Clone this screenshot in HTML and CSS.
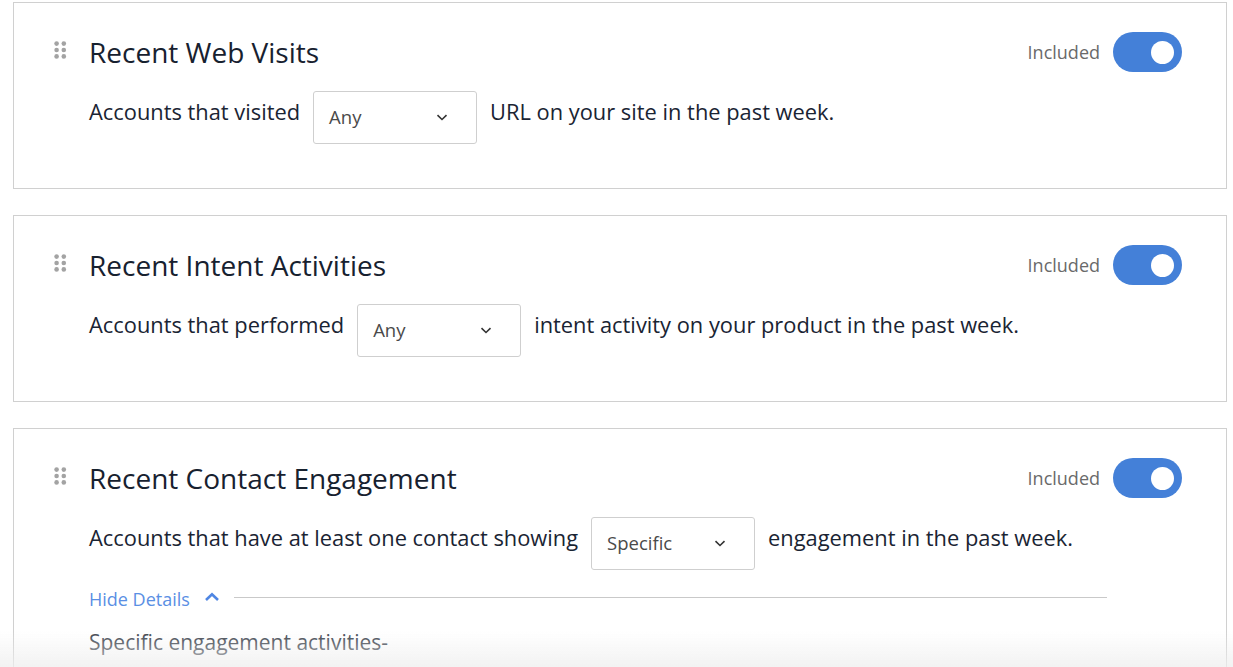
FILE: index.html
```html
<!DOCTYPE html>
<html lang="en">
<head>
<meta charset="utf-8">
<title>Signals</title>
<link rel="stylesheet" href="styles.css">
</head>
<body>
<div class="list">
  <section class="card">
    <div class="card-head">
      <span class="handle"><svg width="13" height="18" viewBox="0 0 13 18"><g fill="#a3a3a3"><circle cx="2.6" cy="2.6" r="2.3"/><circle cx="9.8" cy="2.6" r="2.3"/><circle cx="2.6" cy="9" r="2.3"/><circle cx="9.8" cy="9" r="2.3"/><circle cx="2.6" cy="15.4" r="2.3"/><circle cx="9.8" cy="15.4" r="2.3"/></g></svg></span>
      <h2 class="title">Recent Web Visits</h2>
      <span class="status">Included</span>
      <span class="toggle"><span class="knob"></span></span>
    </div>
    <div class="sentence">
      <span class="txt">Accounts that visited</span>
      <span class="select"><span class="val">Any</span><svg class="chev" width="12" height="7" viewBox="0 0 12 7"><path d="M1.5 1.2 L6 5.5 L10.5 1.2" fill="none" stroke="#333" stroke-width="1.6"/></svg></span>
      <span class="txt">URL on your site in the past week.</span>
    </div>
  </section>

  <section class="card">
    <div class="card-head">
      <span class="handle"><svg width="13" height="18" viewBox="0 0 13 18"><g fill="#a3a3a3"><circle cx="2.6" cy="2.6" r="2.3"/><circle cx="9.8" cy="2.6" r="2.3"/><circle cx="2.6" cy="9" r="2.3"/><circle cx="9.8" cy="9" r="2.3"/><circle cx="2.6" cy="15.4" r="2.3"/><circle cx="9.8" cy="15.4" r="2.3"/></g></svg></span>
      <h2 class="title">Recent Intent Activities</h2>
      <span class="status">Included</span>
      <span class="toggle"><span class="knob"></span></span>
    </div>
    <div class="sentence">
      <span class="txt">Accounts that performed</span>
      <span class="select"><span class="val">Any</span><svg class="chev" width="12" height="7" viewBox="0 0 12 7"><path d="M1.5 1.2 L6 5.5 L10.5 1.2" fill="none" stroke="#333" stroke-width="1.6"/></svg></span>
      <span class="txt">intent activity on your product in the past week.</span>
    </div>
  </section>

  <section class="card card-open">
    <div class="card-head">
      <span class="handle"><svg width="13" height="18" viewBox="0 0 13 18"><g fill="#a3a3a3"><circle cx="2.6" cy="2.6" r="2.3"/><circle cx="9.8" cy="2.6" r="2.3"/><circle cx="2.6" cy="9" r="2.3"/><circle cx="9.8" cy="9" r="2.3"/><circle cx="2.6" cy="15.4" r="2.3"/><circle cx="9.8" cy="15.4" r="2.3"/></g></svg></span>
      <h2 class="title">Recent Contact Engagement</h2>
      <span class="status">Included</span>
      <span class="toggle"><span class="knob"></span></span>
    </div>
    <div class="sentence">
      <span class="txt">Accounts that have at least one contact showing</span>
      <span class="select"><span class="val">Specific</span><svg class="chev" width="12" height="7" viewBox="0 0 12 7"><path d="M1.5 1.2 L6 5.5 L10.5 1.2" fill="none" stroke="#333" stroke-width="1.6"/></svg></span>
      <span class="txt">engagement in the past week.</span>
    </div>
    <div class="details">
      <div class="details-toggle">
        <span class="link">Hide Details</span>
        <svg class="up" width="16" height="10" viewBox="0 0 16 10"><path d="M2 8 L8 2.3 L14 8" fill="none" stroke="#4f86e3" stroke-width="2.6"/></svg>
        <span class="rule"></span>
      </div>
      <p class="details-label">Specific engagement activities-</p>
    </div>
  </section>
</div>
<div class="fade"></div>
</body>
</html>
```

FILE: styles.css
```css
html, body {
  margin: 0;
  padding: 0;
  background: #ffffff;
  overflow: hidden;
}

body {
  font-family: "Open Sans", "Noto Sans", sans-serif;
  color: #1d2838;
  height: 667px;
}

.list {
  padding: 2px 6px 0 13px;
  display: flex;
  flex-direction: column;
  gap: 26px;
}

.card {
  border: 1px solid #d0d0d0;
  padding: 29px 44px 44px 39px;
  background: #fff;
}

.card-open {
  padding-bottom: 120px;
}

.card-head {
  display: flex;
  align-items: center;
  height: 40px;
}

.handle {
  width: 36px;
  display: flex;
  align-items: center;
  margin-top: -4px;
}

.handle svg {
  display: block;
  margin-left: 1px;
}

.title {
  flex: 1;
  margin: 0;
  font-size: 28px;
  font-weight: 400;
  line-height: 40px;
  color: #17212f;
}

.status {
  font-size: 18px;
  color: #6a6a6a;
  margin-right: 13px;
}

.toggle {
  width: 69px;
  height: 40px;
  border-radius: 20px;
  background: #4480d8;
  display: flex;
  align-items: center;
  justify-content: flex-end;
  padding-right: 8px;
  box-sizing: border-box;
}

.knob {
  width: 23px;
  height: 23px;
  border-radius: 50%;
  background: #fff;
}

.sentence {
  display: flex;
  align-items: center;
  margin-top: 19px;
  margin-left: 36px;
  gap: 13px;
}

.txt {
  font-size: 21.85px;
  line-height: 30px;
  padding-bottom: 12px;
  color: #1a2433;
}

.select {
  width: 164px;
  height: 53px;
  box-sizing: border-box;
  border: 1px solid #cfcfcf;
  border-radius: 3px;
  display: flex;
  align-items: center;
  padding: 0 28px 2px 15px;
  background: #fff;
}

.val {
  flex: 1;
  font-size: 18.5px;
  color: #4a4a4a;
}

.chev {
  display: block;
  margin-top: 2px;
}

.details {
  margin-left: 36px;
  margin-right: 75px;
  margin-top: 16px;
}

.details-toggle {
  display: flex;
  align-items: center;
  height: 26px;
}

.link {
  font-size: 18px;
  color: #5a8fe4;
}

.up {
  display: block;
  margin-left: 14px;
  margin-top: -4px;
}

.rule {
  flex: 1;
  height: 1px;
  background: #c9c9c9;
  margin-left: 14px;
  margin-top: -4px;
}

.details-label {
  margin: 15px 0 0;
  font-size: 21px;
  line-height: 30px;
  color: #3d444e;
}

.fade {
  position: fixed;
  left: 0;
  right: 0;
  bottom: 0;
  height: 36px;
  background: linear-gradient(to bottom, rgba(240,240,240,0), rgba(238,238,238,0.75));
  pointer-events: none;
}
```
